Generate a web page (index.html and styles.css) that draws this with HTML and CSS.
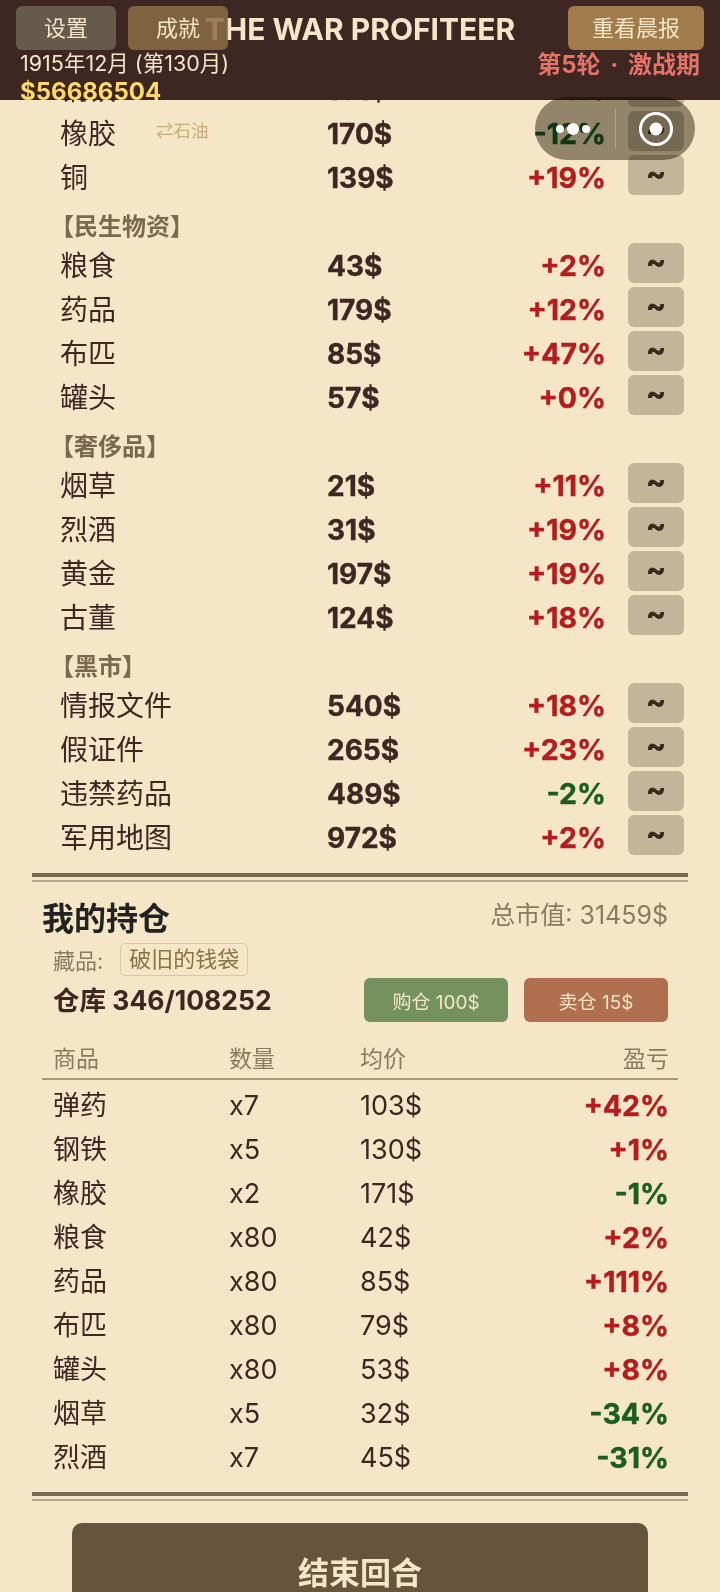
FILE: index.html
```html
<!DOCTYPE html>
<html lang="zh">
<head>
    <meta charset="utf-8">
    <title>The War Profiteer</title>
    <link rel="stylesheet" href="styles.css">
</head>
<body>
    <header class="topbar">
        <h1 class="title">THE WAR PROFITEER</h1>
        <div class="topbar-btns">
            <div class="btn-left">
                <span class="top-btn btn-settings">设置</span>
                <span class="top-btn btn-achieve">成就</span>
            </div>
            <span class="top-btn btn-report">重看晨报</span>
        </div>
        <div class="status">
            <div>
                <div class="date">1915年12月 (第130月)</div>
                <div class="money">$56686504</div>
            </div>
            <div class="round">第5轮 · 激战期</div>
        </div>
    </header>

    <main class="content">
        <section class="market">
            <div class="row"><span class="name">钢铁</span><span></span><b class="price">131$</b><b class="pct up">+1%</b><span class="trend">~</span></div>
            <div class="row"><span class="name">橡胶</span><span class="swap">⇄石油</span><b class="price">170$</b><b class="pct down">-12%</b><span class="trend">~</span></div>
            <div class="row"><span class="name">铜</span><span></span><b class="price">139$</b><b class="pct up">+19%</b><span class="trend">~</span></div>

            <h3 class="cat">【民生物资】</h3>
            <div class="row"><span class="name">粮食</span><span></span><b class="price">43$</b><b class="pct up">+2%</b><span class="trend">~</span></div>
            <div class="row"><span class="name">药品</span><span></span><b class="price">179$</b><b class="pct up">+12%</b><span class="trend">~</span></div>
            <div class="row"><span class="name">布匹</span><span></span><b class="price">85$</b><b class="pct up">+47%</b><span class="trend">~</span></div>
            <div class="row"><span class="name">罐头</span><span></span><b class="price">57$</b><b class="pct up">+0%</b><span class="trend">~</span></div>

            <h3 class="cat">【奢侈品】</h3>
            <div class="row"><span class="name">烟草</span><span></span><b class="price">21$</b><b class="pct up">+11%</b><span class="trend">~</span></div>
            <div class="row"><span class="name">烈酒</span><span></span><b class="price">31$</b><b class="pct up">+19%</b><span class="trend">~</span></div>
            <div class="row"><span class="name">黄金</span><span></span><b class="price">197$</b><b class="pct up">+19%</b><span class="trend">~</span></div>
            <div class="row"><span class="name">古董</span><span></span><b class="price">124$</b><b class="pct up">+18%</b><span class="trend">~</span></div>

            <h3 class="cat">【黑市】</h3>
            <div class="row"><span class="name">情报文件</span><span></span><b class="price">540$</b><b class="pct up">+18%</b><span class="trend">~</span></div>
            <div class="row"><span class="name">假证件</span><span></span><b class="price">265$</b><b class="pct up">+23%</b><span class="trend">~</span></div>
            <div class="row"><span class="name">违禁药品</span><span></span><b class="price">489$</b><b class="pct down">-2%</b><span class="trend">~</span></div>
            <div class="row"><span class="name">军用地图</span><span></span><b class="price">972$</b><b class="pct up">+2%</b><span class="trend">~</span></div>
        </section>

        <div class="rule"></div>

        <section class="holdings">
            <div class="hold-head">
                <h2>我的持仓</h2>
                <span class="total">总市值: 31459$</span>
            </div>
            <div class="relics">
                <span>藏品:</span>
                <span class="relic">破旧的钱袋</span>
            </div>
            <div class="store">
                <b>仓库 346/108252</b>
                <div class="store-btns">
                    <span class="store-btn buy">购仓 100$</span>
                    <span class="store-btn sell">卖仓 15$</span>
                </div>
            </div>

            <div class="hold-table">
                <div class="hold-row hold-title"><span>商品</span><span>数量</span><span>均价</span><span class="right">盈亏</span></div>
                <div class="hold-row"><span>弹药</span><span class="num">x7</span><span class="num">103$</span><b class="right up">+42%</b></div>
                <div class="hold-row"><span>钢铁</span><span class="num">x5</span><span class="num">130$</span><b class="right up">+1%</b></div>
                <div class="hold-row"><span>橡胶</span><span class="num">x2</span><span class="num">171$</span><b class="right down">-1%</b></div>
                <div class="hold-row"><span>粮食</span><span class="num">x80</span><span class="num">42$</span><b class="right up">+2%</b></div>
                <div class="hold-row"><span>药品</span><span class="num">x80</span><span class="num">85$</span><b class="right up">+111%</b></div>
                <div class="hold-row"><span>布匹</span><span class="num">x80</span><span class="num">79$</span><b class="right up">+8%</b></div>
                <div class="hold-row"><span>罐头</span><span class="num">x80</span><span class="num">53$</span><b class="right up">+8%</b></div>
                <div class="hold-row"><span>烟草</span><span class="num">x5</span><span class="num">32$</span><b class="right down">-34%</b></div>
                <div class="hold-row"><span>烈酒</span><span class="num">x7</span><span class="num">45$</span><b class="right down">-31%</b></div>
            </div>
        </section>

        <div class="rule rule-end"></div>

        <div class="end-turn">结束回合</div>
    </main>

    <!-- wechat capsule -->
    <div class="capsule">
        <svg class="dots" width="42" height="14" viewBox="0 0 42 14">
            <circle cx="8" cy="7" r="4" fill="#fff"/>
            <circle cx="21" cy="7" r="6" fill="#fff"/>
            <circle cx="34" cy="7" r="4" fill="#fff"/>
        </svg>
        <span class="capsule-line"></span>
        <svg class="target" width="36" height="36" viewBox="0 0 36 36">
            <circle cx="18" cy="18" r="15.5" fill="none" stroke="#fff" stroke-width="3"/>
            <circle cx="18" cy="18" r="6.5" fill="#fff"/>
        </svg>
    </div>
</body>
</html>
```

FILE: styles.css
```css
* {
    box-sizing: border-box;
}
html, body {
    margin: 0;
    height: 1592px;
    overflow: hidden;
}
body {
    position: relative;
    background-color: #f5e6c8;
    color: #3e2723;
    font-family: "Inter", "Noto Sans CJK SC", sans-serif;
}

/* top bar */
.topbar {
    position: relative;
    height: 100px;
    padding: 6px 16px 0 16px;
    background-color: #3e2723;
}
.topbar-btns {
    position: relative;
    display: flex;
    justify-content: space-between;
}
.btn-left {
    display: flex;
    gap: 12px;
}
.top-btn {
    height: 44px;
    padding-bottom: 4px;
    border-radius: 6px;
    display: flex;
    align-items: center;
    justify-content: center;
    color: #f5e6c8;
    font-size: 22px;
}
.btn-settings {
    width: 100px;
    background-color: #655a4c;
}
.btn-achieve {
    width: 100px;
    background-color: rgba(139, 111, 71, 0.85);
}
.btn-report {
    width: 136px;
    background-color: #a07c4c;
}
/* sits under the buttons, the first letter shows through */
.title {
    position: absolute;
    top: 9px;
    left: 0;
    right: 0;
    margin: 0;
    text-align: center;
    color: #f5e6c8;
    font-size: 30px;
    line-height: 40px;
    font-weight: 700;
}
.status {
    display: flex;
    justify-content: space-between;
    padding: 0 4px;
}
.date {
    font-size: 21.5px;
    line-height: 27px;
    color: #f5e6c8;
}
.money {
    font-size: 24px;
    line-height: 30px;
    font-weight: 700;
    color: #ffd966;
}
.round {
    font-size: 24px;
    line-height: 30px;
    word-spacing: 4px;
    font-weight: 700;
    color: #e57368;
}

/* market list */
.content {
    margin-top: -33px;
    padding: 0 32px;
}
.row {
    display: grid;
    grid-template-columns: 96px 171px 120px 159px 54px;
    align-items: center;
    height: 44px;
    padding-left: 28px;
    font-size: 28px;
}
.name {
    padding-bottom: 2px;
    white-space: nowrap;
}
.swap {
    font-size: 17.5px;
    color: #c9ad7a;
    padding-bottom: 8px;
    white-space: nowrap;
}
.price {
    padding-top: 2px;
    font-size: 28px;
    font-weight: 700;
    -webkit-text-stroke: 0.4px currentColor;
}
.pct {
    font-size: 28.5px;
    font-weight: 700;
    -webkit-text-stroke: 0.4px currentColor;
    text-align: right;
}
.up {
    color: #b71c1c;
}
.down {
    color: #1b5e20;
}
.trend {
    width: 56px;
    height: 40px;
    margin: 0 0 4px 22px;
    border-radius: 6px;
    background-color: #c4b59a;
    text-align: center;
    font-size: 30px;
    font-weight: 800;
    line-height: 36px;
}
.cat {
    margin: 0;
    height: 44px;
    padding: 14px 0 0 18px;
    font-size: 24px;
    line-height: 28px;
    font-weight: 700;
    color: #7a6850;
}

.rule {
    height: 9px;
    border-top: 4px solid #7a6850;
    border-bottom: 2px solid #b8a888;
    margin-top: 14px;
}

/* holdings */
.holdings {
    padding: 0 20px 0 10px;
}
.hold-head {
    display: flex;
    justify-content: space-between;
    margin-top: 15px;
}
.hold-head h2 {
    margin: 0;
    font-size: 32px;
    line-height: 44px;
    font-weight: 700;
    color: #222;
}
.total {
    margin-top: 1px;
    font-size: 25px;
    line-height: 34px;
    color: #8a7a62;
}
.relics {
    display: flex;
    align-items: center;
    gap: 17px;
    padding-left: 11px;
    height: 34px;
    margin-top: 1px;
    font-size: 22px;
    color: #8a7a62;
}
.relic {
    font-size: 22px;
    line-height: 31px;
    padding: 0 8px;
    border: 1px solid #d8c99f;
    border-radius: 5px;
    color: #8a7343;
}
.store {
    display: flex;
    justify-content: space-between;
    align-items: flex-start;
    padding-left: 11px;
    height: 44px;
}
.store b {
    font-size: 26.5px;
    line-height: 48px;
}
.store-btns {
    display: flex;
    gap: 16px;
    padding-top: 2px;
}
.store-btn {
    width: 144px;
    height: 44px;
    border-radius: 6px;
    display: flex;
    align-items: center;
    justify-content: center;
    color: #f5e6c8;
    font-size: 19px;
}
.buy {
    background-color: #74915f;
}
.sell {
    background-color: #b06f4f;
}
.hold-table {
    margin: 20px -10px 0 0;
}
.hold-row {
    display: grid;
    grid-template-columns: 176px 131px 1fr 140px;
    align-items: center;
    height: 44px;
    padding: 0 9px 0 11px;
    font-size: 27px;
}
.hold-title {
    height: 40px;
    padding-bottom: 6px;
    margin-bottom: 1px;
    border-bottom: 2px solid #a8987c;
    font-size: 23px;
    color: #8a7a62;
}
.right {
    text-align: right;
}
.num {
    padding-top: 4px;
}
.hold-row b {
    padding-top: 5px;
    font-size: 28.5px;
    font-weight: 700;
    -webkit-text-stroke: 0.4px currentColor;
}
.rule-end {
    margin-top: 15px;
}

/* end turn */
.end-turn {
    width: 576px;
    height: 94px;
    margin: 22px auto 0 auto;
    border-radius: 10px;
    background-color: #66553c;
    display: flex;
    align-items: center;
    justify-content: center;
    color: #f5e6c8;
    font-size: 31px;
    font-weight: 700;
}

/* floating capsule over the page */
.capsule {
    position: absolute;
    left: 535px;
    top: 97px;
    width: 160px;
    height: 63px;
    display: flex;
    align-items: center;
}
.capsule::before {
    content: "";
    position: absolute;
    inset: 0;
    border-radius: 32px;
    background-color: #999488;
    mix-blend-mode: multiply;
}
.dots {
    position: relative;
    margin-left: 17px;
}
.capsule-line {
    position: relative;
    width: 1px;
    height: 40px;
    margin-left: 21px;
    background-color: rgba(255, 255, 255, 0.25);
}
.target {
    position: relative;
    margin-left: 22px;
}
```
